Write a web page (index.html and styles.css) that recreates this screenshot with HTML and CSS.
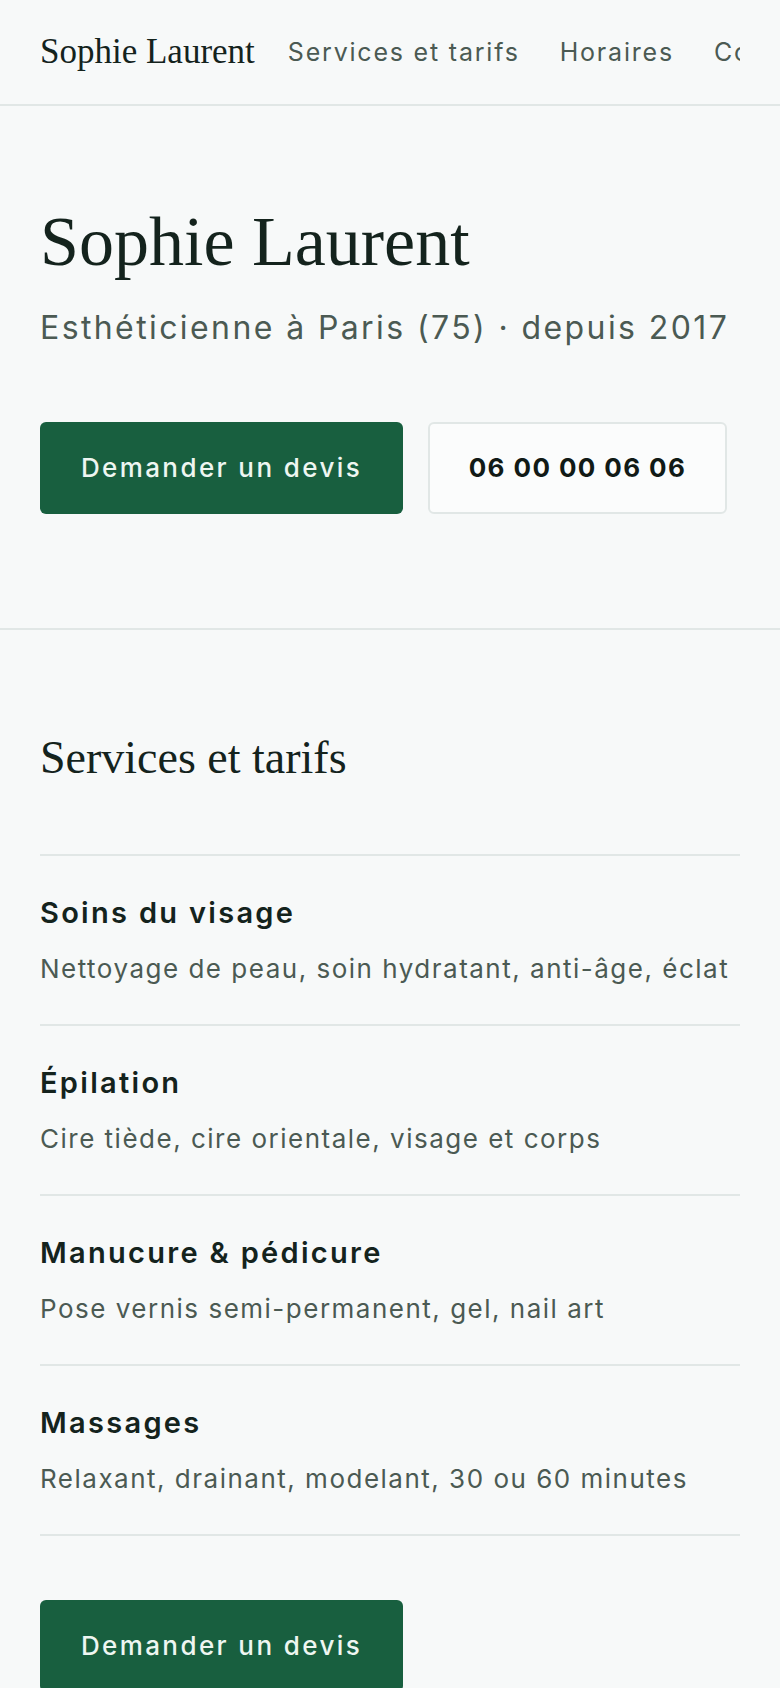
FILE: index.html
```html
<!DOCTYPE html>
<html lang="fr">
<head>
<meta charset="utf-8">
<title>Sophie Laurent — Esthéticienne à Paris</title>
<link rel="stylesheet" href="styles.css">
</head>
<body>
<header class="site-header">
  <div class="header-inner">
    <a class="logo" href="#">Sophie Laurent</a>
    <nav class="nav">
      <a href="#services">Services et tarifs</a>
      <a href="#horaires">Horaires</a>
      <a href="#contact">Contact</a>
    </nav>
  </div>
</header>
<main>
  <section class="hero">
    <h1 class="hero-title">Sophie Laurent</h1>
    <p class="hero-sub">Esthéticienne à Paris (75) · depuis 2017</p>
    <div class="hero-actions">
      <a class="btn btn-primary" href="#devis">Demander un devis</a>
      <a class="btn btn-secondary" href="tel:0600000606">06 00 00 06 06</a>
    </div>
  </section>
  <section class="services" id="services">
    <h2 class="section-title">Services et tarifs</h2>
    <ul class="service-list">
      <li class="service">
        <h3 class="service-name">Soins du visage</h3>
        <p class="service-desc">Nettoyage de peau, soin hydratant, anti-âge, éclat</p>
      </li>
      <li class="service">
        <h3 class="service-name">Épilation</h3>
        <p class="service-desc">Cire tiède, cire orientale, visage et corps</p>
      </li>
      <li class="service">
        <h3 class="service-name">Manucure &amp; pédicure</h3>
        <p class="service-desc">Pose vernis semi-permanent, gel, nail art</p>
      </li>
      <li class="service">
        <h3 class="service-name">Massages</h3>
        <p class="service-desc">Relaxant, drainant, modelant, 30 ou 60 minutes</p>
      </li>
    </ul>
    <div class="services-cta">
      <a class="btn btn-primary" href="#devis">Demander un devis</a>
    </div>
  </section>
</main>
</body>
</html>
```
FILE: styles.css
```css
* { box-sizing: border-box; }
html, body { margin: 0; padding: 0; }
body {
  background: #f7f9f9;
  color: #14231d;
  font-family: "Inter", "Liberation Sans", sans-serif;
  overflow-x: hidden;
}
a { text-decoration: none; color: inherit; }

.site-header {
  border-bottom: 2px solid #e1e7e6;
}
.header-inner {
  height: 104px;
  margin: 0 40px;
  display: flex;
  align-items: center;
  gap: 33px;
  overflow: hidden;
  white-space: nowrap;
}
.logo {
  font-family: "Liberation Serif", serif;
  font-size: 35px;
  color: #14231d;
  flex: none;
}
.nav {
  display: flex;
  gap: 40px;
  font-size: 25px;
  letter-spacing: 1.8px;
  color: #4b5a53;
}
.nav a { flex: none; }

.hero {
  padding: 97px 40px 114px;
  border-bottom: 2px solid #e1e7e6;
}
.hero-title {
  margin: 0;
  font-family: "Liberation Serif", serif;
  font-weight: 400;
  font-size: 70px;
  line-height: 1.1;
  color: #14231d;
}
.hero-sub {
  margin: 26px 0 0;
  font-size: 32px;
  letter-spacing: 2.4px;
  line-height: 1.4;
  color: #4b5a53;
}
.hero-actions {
  margin-top: 71px;
  display: flex;
  gap: 25px;
}
.btn {
  display: inline-flex;
  align-items: center;
  justify-content: center;
  height: 92px;
  border-radius: 6px;
  font-size: 26px;
  font-weight: 500;
}
.btn-primary {
  width: 363px;
  background: #185f3f;
  color: #eef6f1;
  letter-spacing: 2.4px;
}
.btn-secondary {
  width: 299px;
  background: #fbfcfc;
  border: 2px solid #e1e7e6;
  color: #111a16;
  font-weight: 700;
  letter-spacing: 1.4px;
}

.services {
  padding: 100px 40px 0;
}
.section-title {
  margin: 0;
  font-family: "Liberation Serif", serif;
  font-weight: 400;
  font-size: 46px;
  line-height: 1.2;
  color: #14231d;
}
.service-list {
  list-style: none;
  margin: 69px 0 0;
  padding: 0;
  border-bottom: 2px solid #e1e7e6;
}
.service {
  height: 170px;
  border-top: 2px solid #e1e7e6;
  padding-top: 38px;
}
.service-name {
  margin: 0;
  font-size: 29px;
  font-weight: 600;
  letter-spacing: 2.3px;
  line-height: 1.3;
  color: #14231d;
}
.service-desc {
  margin: 19px 0 0;
  font-size: 26px;
  letter-spacing: 1.5px;
  line-height: 1.4;
  color: #4b5a53;
}
.services-cta {
  margin-top: 64px;
}
```
